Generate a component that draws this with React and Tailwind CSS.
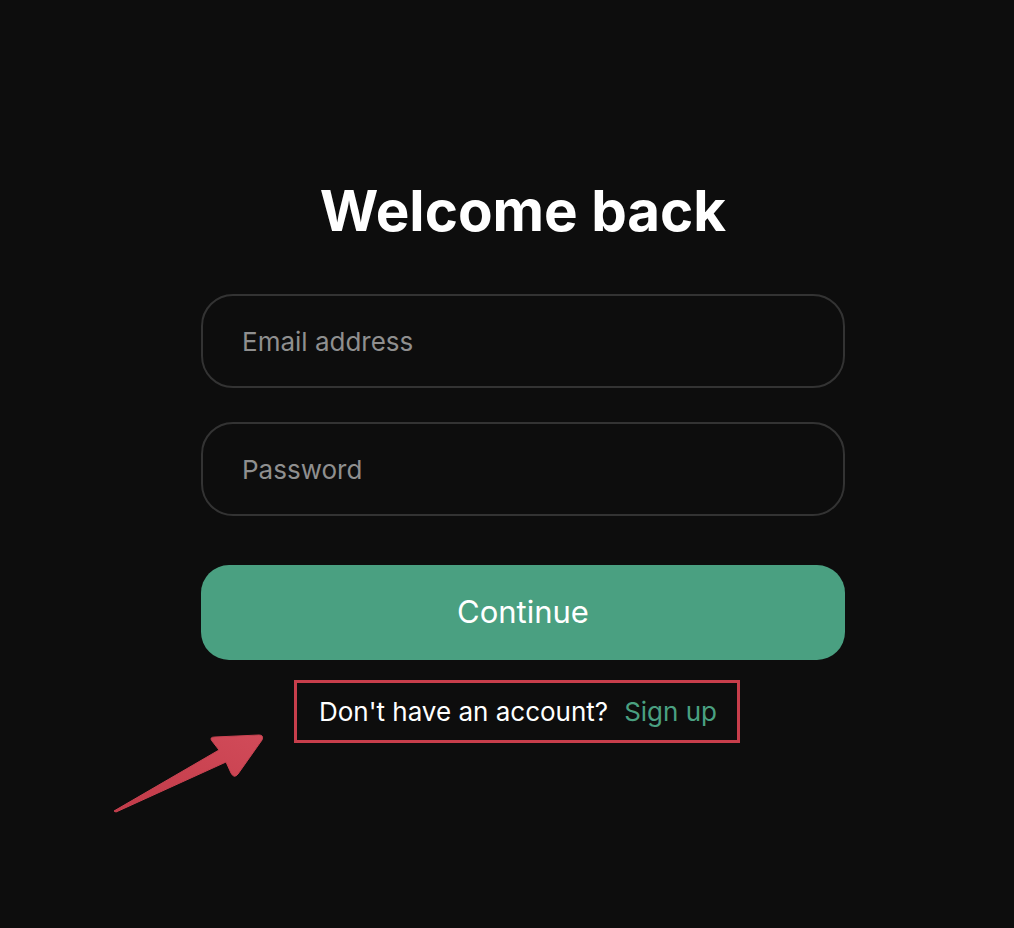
import React from 'react';

const font = { fontFamily: 'Inter, "Noto Sans", sans-serif' };

function Arrow() {
  return (
    <svg className="absolute left-0 top-0 pointer-events-none" width="1014" height="928" viewBox="0 0 1014 928">
      <defs>
        <linearGradient id="arrowFill" x1="0" y1="1" x2="1" y2="0">
          <stop offset="0" stopColor="#c23a48" />
          <stop offset="1" stopColor="#d14b59" />
        </linearGradient>
      </defs>
      <path
        d="M114 811 L219 750 L212 741 Q209 737 215 737 L259 735 Q264 735 262 740 L238 774 Q234 779 231 773 L226 762 L116 812 Z"
        fill="url(#arrowFill)"
        stroke="#c94452"
        strokeWidth="1"
        strokeLinejoin="round"
      />
    </svg>
  );
}

export default function App() {
  return (
    <div className="relative min-h-screen w-full bg-[#0d0d0d] overflow-hidden" style={font}>
      <div className="ml-[201px] w-[644px] pt-[175px] flex flex-col items-center">
        <h1 className="text-[56.5px] leading-[72px] font-bold text-white">Welcome back</h1>

        <div className="w-full mt-[47px] flex flex-col gap-[34px]">
          <input
            type="email"
            placeholder="Email address"
            className="w-full h-[94px] rounded-[32px] border-2 border-[#333333] bg-[#0d0d0d] px-[39px] text-[26px] text-white placeholder:text-[#8f8f8f] outline-none"
          />
          <input
            type="password"
            placeholder="Password"
            className="w-full h-[94px] rounded-[32px] border-2 border-[#333333] bg-[#0d0d0d] px-[39px] text-[26px] text-white placeholder:text-[#8f8f8f] outline-none"
          />
        </div>

        <button className="w-full h-[95px] mt-[49px] rounded-[28px] bg-[#4aa081] text-white text-[31px]">
          Continue
        </button>

        <div className="mt-[20px] -ml-[12px] border-[3px] border-[#c73e4b] pl-[22px] pr-[20px] h-[63px] flex items-center text-[26px]">
          <span className="text-white">Don't have an account?</span>
          <a className="ml-[16px] text-[#4aa081]" href="#">Sign up</a>
        </div>
      </div>
      <Arrow />
    </div>
  );
}
